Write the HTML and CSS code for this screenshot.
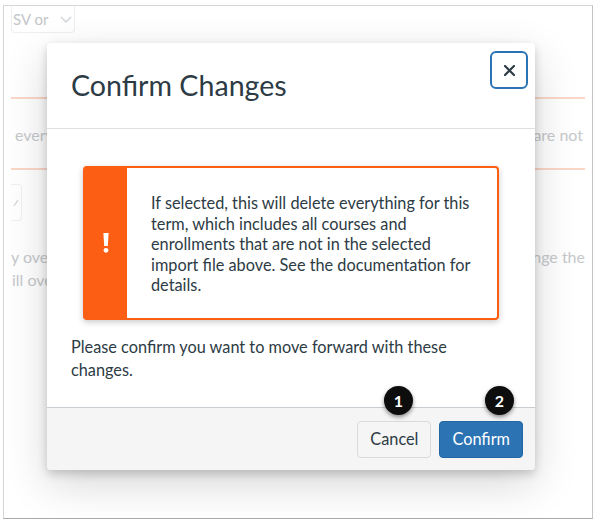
FILE: index.html
```html
<!DOCTYPE html>
<html>
<head>
<meta charset="utf-8">
<link rel="stylesheet" href="styles.css">
</head>
<body>
<div class="frame">
  <div class="page">
    <div class="select">
      <span class="select-text">SV or</span>
      <svg class="chev" width="12" height="7" viewBox="0 0 12 7"><path d="M1 1 L6 6 L11 1" fill="none" stroke="#d3d6d9" stroke-width="1.5"/></svg>
    </div>
    <div class="rule rule-1"></div>
    <div class="row row-1"><span>everything</span><span>are not</span></div>
    <div class="rule rule-2"></div>
    <div class="check"><svg width="6" height="8" viewBox="0 0 6 8"><path d="M1 7 L5 1" stroke="#cfd2d5" stroke-width="1.2"/></svg></div>
    <div class="row row-2"><span>y override</span><span>change the</span></div>
    <div class="row row-3"><span>ill override</span></div>
  </div>

  <div class="modal">
    <div class="modal-header">
      <h2 class="modal-title">Confirm Changes</h2>
      <button class="close-btn" type="button">
        <svg width="11" height="11" viewBox="0 0 11 11"><path d="M1 1 L10 10 M10 1 L1 10" stroke="#2d3b45" stroke-width="2.2" stroke-linecap="round"/></svg>
      </button>
    </div>
    <div class="modal-body">
      <div class="alert">
        <div class="alert-icon">
          <svg width="6" height="20" viewBox="0 0 6 20"><path d="M0.4 0 H5.6 L4.8 13 H1.2 Z" fill="#fff"/><circle cx="3" cy="17.3" r="2.4" fill="#fff"/></svg>
        </div>
        <div class="alert-text">If selected, this will delete everything for this term, which includes all courses and enrollments that are not in the selected import file above. See the documentation for details.</div>
      </div>
      <p class="confirm-text">Please confirm you want to move forward with these changes.</p>
    </div>
    <div class="modal-footer">
      <button class="btn btn-cancel" type="button">Cancel</button>
      <button class="btn btn-primary" type="button">Confirm</button>
    </div>
  </div>

  <span class="badge badge-1">1</span>
  <span class="badge badge-2">2</span>
</div>
</body>
</html>
```

FILE: styles.css
```css
html, body {
  margin: 0;
  padding: 0;
  background: #ffffff;
}

body {
  font-family: "Lato", "Liberation Sans", sans-serif;
  color: #2d3b45;
}

.frame {
  position: relative;
  margin: 5px 0 0 3px;
  width: 588px;
  height: 512px;
  border: 1px solid #d6d6d6;
  border-right-color: #c4c4c4;
  border-bottom-color: #a8a8a8;
  overflow: hidden;
  background: #ffffff;
}

.page {
  padding: 0 7px;
  color: #c6c9cc;
  font-size: 16px;
}

.select {
  width: 64px;
  height: 27px;
  box-sizing: border-box;
  border: 1px solid #efefef;
  border-top: none;
  border-radius: 0 0 4px 4px;
  display: flex;
  align-items: center;
  overflow: hidden;
}

.select-text {
  margin-left: 1px;
  font-size: 15px;
  color: #c3c6c9;
  white-space: nowrap;
}

.chev {
  margin-left: 12px;
}

.rule {
  height: 2px;
  background: #fbd7c8;
}

.rule-1 {
  margin-top: 64px;
}

.row {
  display: flex;
  justify-content: space-between;
  line-height: 23px;
  white-space: nowrap;
}

.row-1 {
  margin-top: 24px;
  padding: 0 2px 0 4px;
}

.rule-2 {
  margin-top: 22px;
}

.check {
  margin-top: 14px;
  width: 11px;
  height: 37px;
  box-sizing: border-box;
  border: 1px solid #f0f0f0;
  border-left: none;
  border-radius: 0 4px 4px 0;
  display: flex;
  align-items: center;
  padding-left: 2px;
}

.row-2 {
  margin-top: 24px;
  padding-left: 0;
}

.row-3 {
  padding-left: 1px;
}

.modal {
  position: absolute;
  left: 43px;
  top: 37px;
  width: 488px;
  height: 427px;
  box-sizing: border-box;
  background: #ffffff;
  border-radius: 4px;
  display: flex;
  flex-direction: column;
  box-shadow: 0 4px 10px rgba(0, 0, 0, 0.18), 0 14px 44px rgba(0, 0, 0, 0.16);
}

.modal-header {
  height: 86px;
  box-sizing: border-box;
  border-bottom: 1px solid #dde1e4;
  display: flex;
  justify-content: space-between;
  align-items: center;
  padding: 0 7px 0 24px;
}

.modal-title {
  margin: 0 0 1px;
  font-size: 28.6px;
  font-weight: 400;
  color: #2d3b45;
}

.close-btn {
  align-self: flex-start;
  margin-top: 8px;
  width: 38px;
  height: 38px;
  box-sizing: border-box;
  border: 2px solid #2b74b4;
  border-radius: 6px;
  background: #ffffff;
  display: flex;
  align-items: center;
  justify-content: center;
  padding: 0;
}

.modal-body {
  flex: 1;
  padding: 24px;
}

.alert {
  margin: 13px 12px 0;
  display: flex;
  border: 2px solid #fc5e13;
  border-radius: 4px;
  background: #ffffff;
  box-shadow: 0 2px 6px rgba(0, 0, 0, 0.22);
}

.alert-icon {
  width: 42px;
  flex-shrink: 0;
  background: #fc5e13;
  display: flex;
  align-items: center;
  justify-content: center;
}

.alert-text {
  padding: 25px 22px 22px 24px;
  font-size: 16.3px;
  line-height: 20.5px;
  color: #2d3b45;
}

.confirm-text {
  margin: 15px 0 0;
  padding-right: 24px;
  font-size: 16.3px;
  line-height: 23px;
  color: #2d3b45;
}

.modal-footer {
  height: 63px;
  box-sizing: border-box;
  border-top: 1px solid #c7cdd1;
  background: #f5f5f5;
  border-radius: 0 0 4px 4px;
  display: flex;
  justify-content: flex-end;
  align-items: center;
  gap: 8px;
  padding: 0 12px;
}

.btn {
  height: 37px;
  padding: 0 12px;
  border-radius: 4px;
  font-family: "Lato", "Liberation Sans", sans-serif;
  font-size: 16.3px;
  line-height: 1;
}

.btn-cancel {
  background: #f5f5f5;
  border: 1px solid #d7dbde;
  color: #2d3b45;
}

.btn-primary {
  background: #2b73b3;
  border: 1px solid #2267a4;
  color: #ffffff;
}

.badge {
  position: absolute;
  top: 380px;
  width: 29px;
  height: 29px;
  border-radius: 50%;
  background: #0d0d0d;
  color: #ffffff;
  font-family: "Lato", "Liberation Sans", sans-serif;
  font-weight: 700;
  font-size: 16px;
  display: flex;
  align-items: center;
  justify-content: center;
  box-shadow: 0 2px 4px rgba(0, 0, 0, 0.45);
}

.badge-1 {
  left: 380px;
}

.badge-2 {
  left: 481px;
}
```
